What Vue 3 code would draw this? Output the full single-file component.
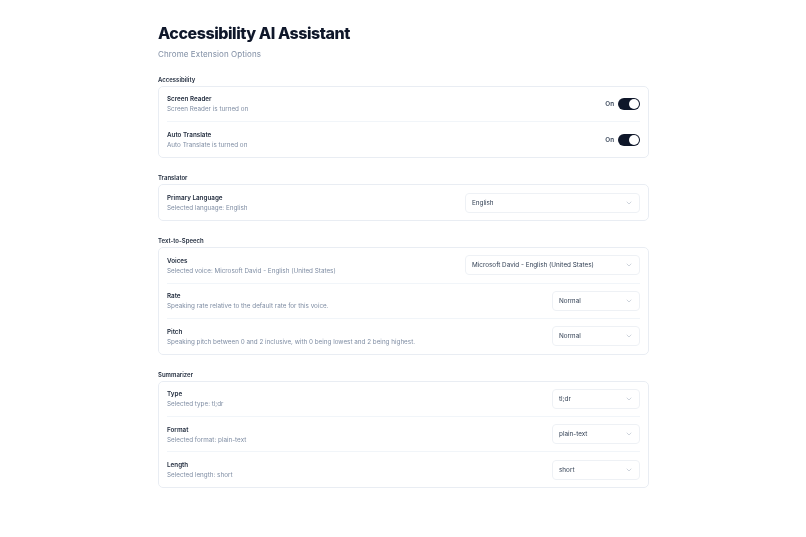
<script setup>
const sections = [
  {
    title: 'Accessibility',
    rows: [
      { name: 'Screen Reader', desc: 'Screen Reader is turned on', toggle: true },
      { name: 'Auto Translate', desc: 'Auto Translate is turned on', toggle: true }
    ]
  },
  {
    title: 'Translator',
    rows: [
      { name: 'Primary Language', desc: 'Selected language: English', value: 'English', wide: true }
    ]
  },
  {
    title: 'Text-to-Speech',
    rows: [
      { name: 'Voices', desc: 'Selected voice: Microsoft David - English (United States)', value: 'Microsoft David - English (United States)', wide: true },
      { name: 'Rate', desc: 'Speaking rate relative to the default rate for this voice.', value: 'Normal' },
      { name: 'Pitch', desc: 'Speaking pitch between 0 and 2 inclusive, with 0 being lowest and 2 being highest.', value: 'Normal' }
    ]
  },
  {
    title: 'Summarizer',
    rows: [
      { name: 'Type', desc: 'Selected type: tl;dr', value: 'tl;dr' },
      { name: 'Format', desc: 'Selected format: plain-text', value: 'plain-text' },
      { name: 'Length', desc: 'Selected length: short', value: 'short' }
    ]
  }
]
</script>

<template>
  <div class="page">
    <h1>Accessibility AI Assistant</h1>
    <p class="subtitle">Chrome Extension Options</p>

    <section v-for="section in sections" :key="section.title" class="section">
      <h2>{{ section.title }}</h2>
      <div class="card">
        <div v-for="row in section.rows" :key="row.name" class="row">
          <div class="info">
            <div class="name">{{ row.name }}</div>
            <div class="desc">{{ row.desc }}</div>
          </div>
          <div v-if="row.toggle" class="toggle-wrap">
            <span class="on">On</span>
            <span class="toggle"><span class="knob"></span></span>
          </div>
          <div v-else class="select" :class="{ wide: row.wide }">
            <span>{{ row.value }}</span>
            <svg viewBox="0 0 24 24" width="8" height="8" fill="none" stroke="#a3aebd" stroke-width="1.6" stroke-linecap="round" stroke-linejoin="round">
              <path d="m6 9 6 6 6-6" />
            </svg>
          </div>
        </div>
      </div>
    </section>
  </div>
</template>

<style>
body {
  background: #fff;
}
</style>

<style scoped>
.page {
  width: 491px;
  margin-left: 158px;
  padding-top: 23px;
  font-family: Inter, "Noto Sans", sans-serif;
  color: #0f172a;
  will-change: opacity;
}

h1 {
  margin: 0;
  font-size: 16px;
  line-height: 21px;
  font-weight: 800;
  letter-spacing: -0.44px;
}

.subtitle {
  margin: 4px 0 0;
  font-size: 8px;
  line-height: 13px;
  letter-spacing: 0.1px;
  color: #7f8da3;
}

.section {
  margin-top: 15.7px;
}

.subtitle + .section {
  margin-top: 14.5px;
}

h2 {
  margin: 0 0 2.3px;
  font-size: 6px;
  line-height: 8px;
  font-weight: 600;
  color: #1e293b;
}

.card {
  border: 1px solid #e9edf3;
  border-radius: 5px;
  padding: 0 8px;
}

.row {
  display: flex;
  align-items: center;
  justify-content: space-between;
  height: 35.2px;
  box-sizing: border-box;
  border-bottom: 1px solid #f1f5f9;
}

.row:last-child {
  border-bottom: none;
}

.info {
  padding-top: 1px;
}

.name {
  font-size: 6.3px;
  line-height: 10px;
  font-weight: 600;
  color: #1e293b;
}

.desc {
  font-size: 6.32px;
  line-height: 10px;
  color: #7f8da3;
}

.toggle-wrap {
  display: flex;
  align-items: center;
  gap: 4px;
}

.on {
  font-size: 6.3px;
  font-weight: 600;
  color: #334155;
}

.toggle {
  display: flex;
  justify-content: flex-end;
  align-items: center;
  width: 22px;
  height: 12px;
  padding: 1px;
  box-sizing: border-box;
  border-radius: 6px;
  background: #0f172a;
}

.knob {
  width: 10px;
  height: 10px;
  border-radius: 50%;
  background: #fff;
}

.select {
  display: flex;
  align-items: center;
  justify-content: space-between;
  width: 88px;
  height: 20px;
  padding: 0 6px;
  box-sizing: border-box;
  border: 1px solid #eef1f5;
  border-radius: 4px;
  font-size: 6.35px;
  color: #334155;
}

.select.wide {
  width: 175px;
}
</style>
